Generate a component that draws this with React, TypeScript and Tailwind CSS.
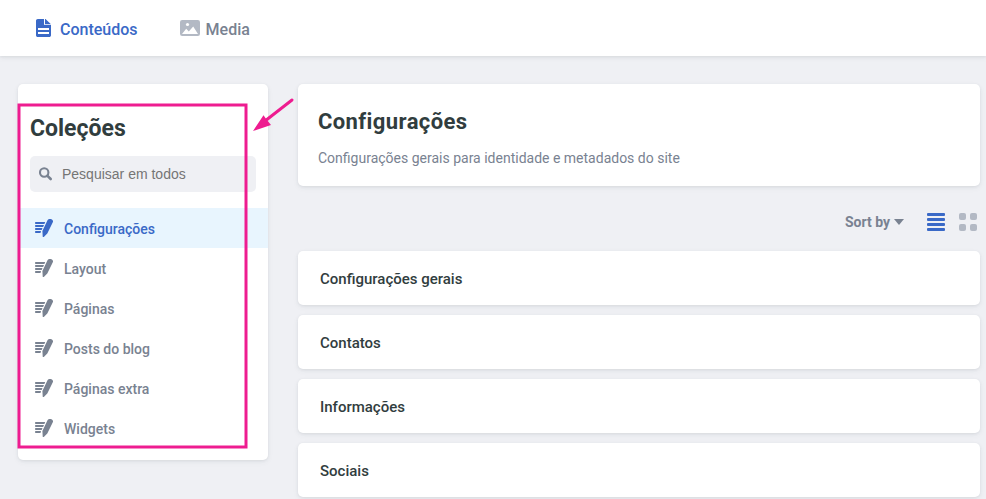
import React from "react";

const shadow = "shadow-[0_2px_6px_0_rgba(68,74,87,0.05),0_1px_3px_0_rgba(68,74,87,0.10)]";

const collections = ["Configurações", "Layout", "Páginas", "Posts do blog", "Páginas extra", "Widgets"];
const entries = ["Configurações gerais", "Contatos", "Informações", "Sociais"];

function PageIcon() {
  return (
    <svg width="15" height="18" viewBox="0 0 15 18" fill="currentColor">
      <path
        fillRule="evenodd"
        d="M1.800 0H8v5.200c0 .5.4.8.8.8H15v10.200c0 1-.8 1.800-1.800 1.800H1.800C.8 18 0 17.200 0 16.200V1.800C0 .8.8 0 1.800 0ZM2 9v2h11V9H2Zm0 4v2h11v-2H2ZM9 0h.5L15 5.200H9V0Z"
      />
    </svg>
  );
}

function MediaIcon() {
  return (
    <svg width="20" height="16" viewBox="0 0 20 16">
      <rect width="20" height="16" rx="2.200" fill="#b3b9c4" />
      <circle cx="7.500" cy="4.500" r="1.600" fill="#fff" />
      <path d="M2 14 6.200 8.700 8.800 11.600 13.200 6.500 18 14Z" fill="#fff" />
    </svg>
  );
}

function WriteIcon() {
  return (
    <svg width="18" height="18" viewBox="0 0 18 18" fill="currentColor" className="shrink-0">
      <path d="M.8 3h9.400l-.8 2H.8A.8.8 0 0 1 0 4.200v-.4A.8.8 0 0 1 .8 3ZM.8 6h8.200l-.9 2H.8A.8.8 0 0 1 0 7.200v-.4A.8.8 0 0 1 .8 6ZM.8 9h6.700l-.8 2H.8a.8.8 0 0 1-.8-.8v-.4A.8.8 0 0 1 .8 9ZM.8 12H6l-.5 2H.8a.8.8 0 0 1-.8-.8v-.4a.8.8 0 0 1 .8-.8Z" />
      <path d="M12.500 1.300C13.200-.1 15.200-.2 16.500.3c1.300.5 1.900 1.600 1.300 3L12.300 14.500 8.800 18c-.4.300-1.100.1-1.100-.5l-.3-5.600Z" />
    </svg>
  );
}

function SearchIcon() {
  return (
    <svg width="14" height="14" viewBox="0 0 14 14" fill="none" stroke="currentColor">
      <circle cx="5.200" cy="5.500" r="4.200" strokeWidth="2.100" />
      <path d="m8.500 8.800 3.200 3.200" strokeWidth="2.600" strokeLinecap="round" />
    </svg>
  );
}

function ListIcon() {
  return (
    <svg width="18" height="18" viewBox="0 0 18 18" fill="#3a69c7">
      <rect width="18" height="3" rx="1" />
      <rect y="5" width="18" height="3" rx="1" />
      <rect y="10" width="18" height="3" rx="1" />
      <rect y="15" width="18" height="3" rx="1" />
    </svg>
  );
}

function GridIcon() {
  return (
    <svg width="18" height="18" viewBox="0 0 18 18" fill="#b3b9c4">
      <rect width="7" height="7" rx="2" />
      <rect x="11" width="7" height="7" rx="2" />
      <rect y="11" width="7" height="7" rx="2" />
      <rect x="11" y="11" width="7" height="7" rx="2" />
    </svg>
  );
}

function Annotation() {
  return (
    <svg className="pointer-events-none absolute left-0 top-0" width="310" height="460" fill="none">
      <rect x="19" y="105" width="227" height="342" stroke="#ee1c90" strokeWidth="3" />
      <path d="M292 100 265 121" stroke="#ee1c90" strokeWidth="3" strokeLinecap="round" />
      <path d="M253 131 263.500 115.300 266.500 119.500 271 125Z" fill="#ee1c90" />
    </svg>
  );
}

export default function App() {
  return (
    <div className="relative h-[499px] w-[986px] overflow-hidden bg-[#eff0f4] font-[Roboto,sans-serif] text-sm text-[#798291]">
      <header className={`flex h-14 items-center bg-white pl-9 pt-1 text-base font-medium ${shadow}`}>
        <a className="flex items-center gap-[9px] text-[#3a69c7]">
          <span className="-mt-[5px]"><PageIcon /></span>
          Conteúdos
        </a>
        <a className="ml-[42px] flex items-center gap-1.5">
          <span className="-mt-[5px]"><MediaIcon /></span>
          Media
        </a>
      </header>

      <div className="flex items-start gap-[30px] pl-[18px] pt-7">
        <aside className={`h-[376px] w-[250px] shrink-0 rounded-[5px] bg-white ${shadow}`}>
          <h2 className="pl-3 pt-[31px] text-[23px] font-bold leading-7 text-[#313d3e]">Coleções</h2>
          <div className="ml-3 mr-3 mt-[13px] flex h-9 items-center gap-[9px] rounded-[5px] bg-[#eff0f4] pl-[9px]">
            <SearchIcon />
            <span className="font-['Liberation_Sans',sans-serif] text-[#757575]">Pesquisar em todos</span>
          </div>
          <nav className="mt-4">
            {collections.map((name, i) => (
              <a
                key={name}
                className={`flex h-10 items-center gap-[11px] pl-[17px] font-medium ${i === 0 ? "bg-[#e8f5fe] text-[#3a69c7]" : ""}`}
              >
                <WriteIcon />
                <span className="pt-0.5">{name}</span>
              </a>
            ))}
          </nav>
        </aside>

        <main className="w-[682px]">
          <section className={`h-[102px] rounded-[5px] bg-white px-5 pt-6 ${shadow}`}>
            <h1 className="text-[22px] font-bold leading-7 tracking-[0.4px] text-[#313d3e]">Configurações</h1>
            <p className="mt-3 leading-5">Configurações gerais para identidade e metadados do site</p>
          </section>
          <div className="flex h-[65px] items-center justify-end pr-[3px] pt-[7px]">
            <span className="font-bold">Sort by</span>
            <span className="ml-1 mr-[23px] border-x-[5px] border-t-[6px] border-x-transparent border-t-[#798291]" />
            <ListIcon />
            <span className="ml-3.5"><GridIcon /></span>
          </div>
          <div className="flex flex-col gap-2.5">
            {entries.map((name) => (
              <article key={name} className={`flex h-[54px] items-center rounded-[5px] bg-white pl-[22px] pt-1 text-[15px] font-medium text-[#313d3e] ${shadow}`}>
                {name}
              </article>
            ))}
          </div>
        </main>
      </div>
      <Annotation />
    </div>
  );
}
